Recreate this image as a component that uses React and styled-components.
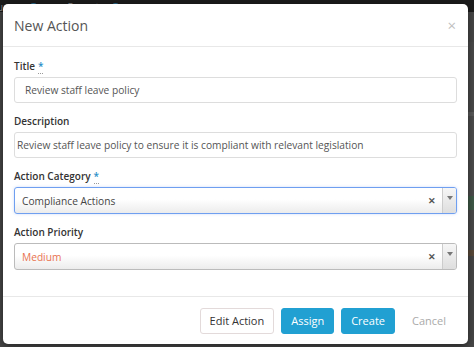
import React from "react";
import styled, { createGlobalStyle } from "styled-components";

const GlobalStyle = createGlobalStyle`
  html, body {
    margin: 0;
    padding: 0;
    background: #3b3b3b;
    font-family: "Open Sans", "Liberation Sans", sans-serif;
  }
`;

const Page = styled.div`
  position: relative;
  width: 474px;
  height: 347px;
  overflow: hidden;
  background: #474747;
`;

const NavBar = styled.div`
  display: flex;
  align-items: flex-end;
  height: 12px;
  background: #1c1c1c;
  color: #8a8a8a;
  font-size: 10px;
  line-height: 10px;
  overflow: hidden;
`;

const NavItem = styled.span`
  display: flex;
  align-items: center;
  gap: 7px;
  margin: -6px 0 0 ${(p) => p.offset}px;
`;

const NavBadge = styled.span`
  width: 9px;
  height: 9px;
  border-radius: 50%;
  background: #2b6f93;
`;

const SideStrip = styled.div`
  display: flex;
  flex-direction: column;
  margin-left: 468px;
  padding-top: 30px;
`;

const Stripe = styled.div`
  height: ${(p) => p.h}px;
  background: ${(p) => p.c};
`;

const Modal = styled.div`
  position: absolute;
  top: 4px;
  left: 3px;
  width: 465px;
  height: 340px;
  background: #fff;
  border-radius: 5px;
  box-shadow: 0 2px 8px rgba(0, 0, 0, 0.5);
  display: flex;
  flex-direction: column;
`;

const Header = styled.div`
  display: flex;
  align-items: center;
  justify-content: space-between;
  height: 42px;
  padding: 0 12px 0 11px;
  border-bottom: 1px solid #e8e8e8;
`;

const Title = styled.h4`
  margin: 0;
  font-size: 14px;
  font-weight: 400;
  color: #555;
`;

const Close = styled.span`
  font-size: 15px;
  color: #c0c0c0;
  line-height: 1;
`;

const Body = styled.div`
  flex: 1;
  padding: 12px 11px 0 11px;
  display: flex;
  flex-direction: column;
  gap: 11px;
`;

const Field = styled.div`
  display: flex;
  flex-direction: column;
  gap: 4px;
`;

const Label = styled.label`
  font-size: 10px;
  font-weight: 600;
  color: #333;
  line-height: 14px;
`;

const Req = styled.span`
  color: #2a8fc8;
  margin-left: 3px;
  border-bottom: 1px dotted #999;
`;

const Input = styled.div`
  height: 26px;
  box-sizing: border-box;
  border: 1px solid #ddd;
  border-radius: 3px;
  padding: 0 ${(p) => (p.tight ? "2px" : "10px")};
  display: flex;
  align-items: center;
  font-size: 10.2px;
  color: #555;
  white-space: nowrap;
  overflow: hidden;
`;

const Select = styled.div`
  height: 27px;
  box-sizing: border-box;
  border: 1px solid ${(p) => (p.focused ? "#6f9ff0" : "#bbb")};
  border-radius: 3px;
  background: linear-gradient(#fff 0%, #fff 45%, #ececec 100%);
  display: flex;
  align-items: center;
  font-size: 10.2px;
  color: ${(p) => p.color || "#444"};
  box-shadow: ${(p) => (p.focused ? "0 0 3px rgba(90,140,240,0.3)" : "none")};
  overflow: hidden;
`;

const SelectText = styled.span`
  flex: 1;
  padding-left: 7px;
`;

const Clear = styled.span`
  width: 20px;
  text-align: center;
  font-size: 9px;
  color: #555;
  font-weight: 700;
`;

const Arrow = styled.span`
  width: 14px;
  align-self: stretch;
  border-left: 1px solid #ccc;
  background: linear-gradient(#f6f6f6, #dedede);
  display: flex;
  justify-content: center;
  padding-top: 8px;
  box-sizing: border-box;
  &::after {
    content: "";
    border-left: 3px solid transparent;
    border-right: 3px solid transparent;
    border-top: 4px solid #777;
    height: 0;
  }
`;

const Footer = styled.div`
  height: 47px;
  border-top: 1px solid #e8e8e8;
  display: flex;
  align-items: center;
  justify-content: flex-end;
  gap: 7px;
  padding: 0 13px 0 0;
`;

const Button = styled.button`
  height: 26px;
  padding: 0 ${(p) => (p.variant === "link" ? "8px" : "9px")};
  margin-left: ${(p) => (p.variant === "link" ? "1px" : "0")};
  border-radius: 3px;
  font-family: inherit;
  font-size: 11px;
  border: 1px solid
    ${(p) =>
      p.variant === "primary" ? "#21a0d2" : p.variant === "link" ? "transparent" : "#e3dada"};
  background: ${(p) => (p.variant === "primary" ? "#21a0d2" : "#fff")};
  color: ${(p) =>
    p.variant === "primary" ? "#fff" : p.variant === "link" ? "#aaa" : "#333"};
`;

export default function App() {
  return (
    <Page>
      <GlobalStyle />
      <NavBar>
        <NavItem offset={-3}>urces <NavBadge /></NavItem>
        <NavItem offset={29}>Reports <NavBadge /></NavItem>
      </NavBar>
      <SideStrip>
        <Stripe h={70} c="#4a4a4a" />
        <Stripe h={4} c="#5a5a5a" />
        <Stripe h={80} c="#4d4d4d" />
        <Stripe h={14} c="#3f5a48" />
        <Stripe h={40} c="#4a4a4a" />
        <Stripe h={6} c="#5a4a3a" />
        <Stripe h={120} c="#474747" />
      </SideStrip>
      <Modal>
        <Header>
          <Title>New Action</Title>
          <Close>×</Close>
        </Header>
        <Body>
          <Field>
            <Label>
              Title<Req>*</Req>
            </Label>
            <Input>Review staff leave policy</Input>
          </Field>
          <Field>
            <Label>Description</Label>
            <Input tight>Review staff leave policy to ensure it is compliant with relevant legislation</Input>
          </Field>
          <Field>
            <Label>
              Action Category<Req>*</Req>
            </Label>
            <Select focused>
              <SelectText>Compliance Actions</SelectText>
              <Clear>✕</Clear>
              <Arrow />
            </Select>
          </Field>
          <Field>
            <Label>Action Priority</Label>
            <Select color="#e9734f">
              <SelectText>Medium</SelectText>
              <Clear>✕</Clear>
              <Arrow />
            </Select>
          </Field>
        </Body>
        <Footer>
          <Button>Edit Action</Button>
          <Button variant="primary">Assign</Button>
          <Button variant="primary">Create</Button>
          <Button variant="link">Cancel</Button>
        </Footer>
      </Modal>
    </Page>
  );
}
